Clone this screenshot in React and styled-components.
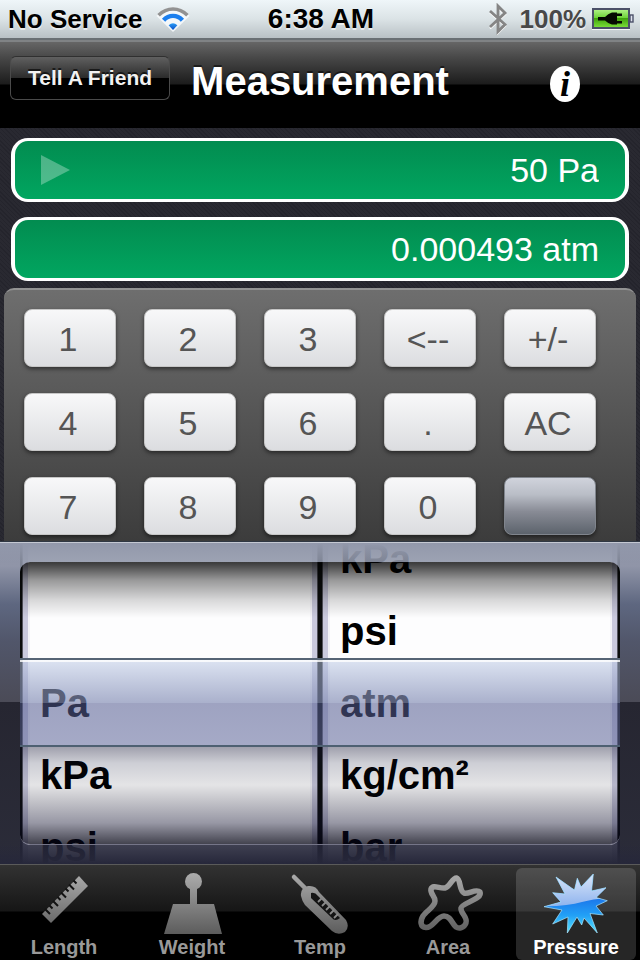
import React, { useState } from 'react';
import styled, { createGlobalStyle } from 'styled-components';

const GlobalStyle = createGlobalStyle`
  * {
    box-sizing: border-box;
  }
  body {
    margin: 0;
    background: #000;
    font-family: 'Liberation Sans', Arial, sans-serif;
  }
  button,
  input {
    font-family: inherit;
    border: none;
    padding: 0;
    margin: 0;
  }
`;

const keys = [
  '1', '2', '3', '<--', '+/-',
  '4', '5', '6', '.', 'AC',
  '7', '8', '9', '0', '',
];

const fromUnits = ['', '', 'Pa', 'kPa', 'psi'];
const toUnits = ['kPa', 'psi', 'atm', 'kg/cm²', 'bar'];

const WifiIcon = () => (
  <svg width='34' height='26' viewBox='0 0 34 26' fill='none'>
    <defs>
      <linearGradient id='wifiBlue' x1='0' y1='0' x2='0' y2='1'>
        <stop offset='0' stopColor='#2a9bf5' />
        <stop offset='1' stopColor='#0a4fc8' />
      </linearGradient>
    </defs>
    <path
      d='M17 26 L0.5 10 Q7 1.5 17 1.5 Q27 1.5 33.5 10 Z'
      fill='#f6fafc'
      opacity='0.9'
    />
    <path d='M2.6 9.2 Q9 3 17 3 Q25 3 31.4 9.2' stroke='#929292' strokeWidth='3.6' />
    <path d='M7.6 14.2 Q11.5 9.9 17 9.9 Q22.5 9.9 26.4 14.2' stroke='#1c7fee' strokeWidth='4.4' />
    <path d='M17 24 L12.6 19.2 Q17 15.2 21.4 19.2 Z' fill='url(#wifiBlue)' />
  </svg>
);

const BluetoothIcon = () => (
  <svg width='20' height='32' viewBox='0 0 20 32' fill='none'>
    <path d='M2 9.5 L17 23 L10 30 V5 L17 11.5 L2 25.5' stroke='#fff' strokeWidth='2' />
    <path d='M2 8 L17 21.5 L10 28.5 V3 L17 10 L2 24' stroke='#858585' strokeWidth='2.8' />
  </svg>
);

const BatteryIcon = () => (
  <svg width='42' height='22' viewBox='0 0 42 22'>
    <defs>
      <linearGradient id='charge' x1='0' y1='0' x2='0' y2='1'>
        <stop offset='0' stopColor='#b4f48a' />
        <stop offset='0.45' stopColor='#6fd43a' />
        <stop offset='0.5' stopColor='#3fa30c' />
        <stop offset='1' stopColor='#7fe33c' />
      </linearGradient>
    </defs>
    <rect x='0' y='2' width='38' height='20' fill='#fff' opacity='0.8' />
    <rect x='1' y='1' width='36' height='19' fill='url(#charge)' stroke='#4b5068' strokeWidth='2' />
    <rect x='38' y='7' width='3' height='7' fill='#dfe3ee' stroke='#4b5068' strokeWidth='1.4' />
    <path
      d='M6 9 H13 Q16 5.5 20 4.5 H25 V5.5 H30 V8 H25 V13 H30 V15.5 H25 V16.5 H20 Q16 15.500 13 12.5 H6 Z'
      fill='#050a02'
    />
  </svg>
);

const Greys = ({ id }) => (
  <defs>
    <linearGradient id={id} gradientUnits='userSpaceOnUse' x1='0' y1='0' x2='0' y2='64'>
      <stop offset='0' stopColor='#b0b0b0' />
      <stop offset='1' stopColor='#5c5c5c' />
    </linearGradient>
  </defs>
);

const LengthIcon = () => (
  <TabIcon viewBox='0 0 80 64'>
    <Greys id='gLength' />
    <path d='M18 44 L55 6 L64 16 L27 53 Z' fill='url(#gLength)' />
    <path
      d='M21 39 l5 5 M25.500 35.500 l3 3 M29 31 l5 5 M33.500 27 l3 3 M37 22.500 l5 5 M41.500 18.500 l3 3 M45 14.500 l5 5 M49.500 10.500 l3 3'
      stroke='#121212'
      strokeWidth='2'
    />
  </TabIcon>
);

const WeightIcon = () => (
  <TabIcon viewBox='0 0 80 64'>
    <Greys id='gWeight' />
    <g fill='url(#gWeight)'>
      <circle cx='41.5' cy='11.5' r='8.5' />
      <rect x='38' y='18' width='7' height='17' />
      <path d='M21 34 H62 L70 64 H12 Z' />
    </g>
  </TabIcon>
);

const TempIcon = () => (
  <TabIcon viewBox='0 0 80 64'>
    <Greys id='gTemp' />
    <path d='M14 7 L25 18' stroke='url(#gTemp)' strokeWidth='4.500' strokeLinecap='round' />
    <path
      d='M21 26 Q20 18 28 16 Q36 15 39 22 L66 50 Q70 57 65 62 Q58 66 52 61 L25 35 Q22 31 21 26 Z'
      fill='url(#gTemp)'
    />
    <path
      d='M31 23 Q35 22 38 26 L60 48 Q55 52 52 48 L31 28 Z'
      fill='#141414'
    />
    <path
      d='M38 32 l4 -4 M42 36 l4 -4 M46 40 l4 -4 M50 44 l4 -4 M54 48 l4 -4'
      stroke='#8a8a8a'
      strokeWidth='1.8'
    />
  </TabIcon>
);

const AreaIcon = () => (
  <TabIcon viewBox='0 0 80 64'>
    <Greys id='gArea' />
    <path
      d='M48.500 8 C53 9 51 21 56 23 C60 25 68 18 72 22 C75 29 54 33 53 38 C52 43 60 47 58 53 C56 58 51 59 48 57 C44 54 43 46 36 46 C29 46 25 58 18 57.500 C12 57 12 51 15 46 C18 41 27 37 27 31 C27 26 22 24 23 19 C25 14 32 19 37 18 C42 17 44 8 48.500 8 Z'
      fill='none'
      stroke='url(#gArea)'
      strokeWidth='5.500'
      strokeLinejoin='round'
    />
  </TabIcon>
);

const burst =
  'M20 7 L35.500 18 L38.500 20 L41.300 8.300 L45 17 L57.300 4 L55.500 21 L70 17.700 L60 27.500 L71.300 30.700 L60 36 L67.300 45 L54 43.500 L61.300 63 L48 48 L45.700 55 L41 47 L31.300 63 L32 47 L16.700 54 L26 40 L8 36.700 L25 32 L16.700 22.700 L29 24 Z';

const PressureIcon = () => (
  <TabIcon viewBox='0 0 80 64'>
    <defs>
      <linearGradient id='burstLow' x1='0' y1='0' x2='0' y2='1'>
        <stop offset='0.4' stopColor='#1b74ea' />
        <stop offset='0.7' stopColor='#22a0f6' />
        <stop offset='1' stopColor='#56e6ff' />
      </linearGradient>
      <linearGradient id='burstTop' x1='0' y1='0' x2='0' y2='1'>
        <stop offset='0' stopColor='#e4ecfa' />
        <stop offset='1' stopColor='#8fb4ee' />
      </linearGradient>
      <clipPath id='burstClip'>
        <path d={burst} />
      </clipPath>
    </defs>
    <path d={burst} fill='url(#burstLow)' />
    <path
      d='M0 0 H80 V28 Q60 28 46 32 Q30 37 0 36 Z'
      fill='url(#burstTop)'
      clipPath='url(#burstClip)'
    />
    <path d={burst} fill='none' stroke='#a8e4ff' strokeWidth='1' opacity='0.7' />
  </TabIcon>
);

const tabs = [
  { name: 'Length', Icon: LengthIcon },
  { name: 'Weight', Icon: WeightIcon },
  { name: 'Temp', Icon: TempIcon },
  { name: 'Area', Icon: AreaIcon },
  { name: 'Pressure', Icon: PressureIcon },
];

const UnitWheel = ({ label, units }) => (
  <Wheel role='listbox' aria-label={label}>
    {units.map((unit, i) => (
      <Unit key={i} role='option' aria-selected={i === 2}>
        {unit}
      </Unit>
    ))}
  </Wheel>
);

const App = () => {
  const [tab, setTab] = useState('Pressure');

  return (
    <Screen>
      <GlobalStyle />
      <StatusBar>
        <StatusGroup>
          <Carrier>No Service</Carrier>
          <WifiIcon />
        </StatusGroup>
        <Clock>6:38 AM</Clock>
        <StatusGroup $end>
          <BluetoothIcon />
          <Charge>100%</Charge>
          <BatteryIcon />
        </StatusGroup>
      </StatusBar>

      <Header>
        <HeaderSide>
          <FriendButton type='button'>Tell A Friend</FriendButton>
        </HeaderSide>
        <Title>Measurement</Title>
        <HeaderSide $end>
          <InfoButton type='button' aria-label='Info'>
            i
          </InfoButton>
        </HeaderSide>
      </Header>

      <Readouts>
        <Readout>
          <Marker viewBox='0 0 30 32'>
            <path d='M1 1 L30 16 L1 31 Z' fill='#fff' opacity='0.3' />
          </Marker>
          <Value aria-label='From' readOnly value='50 Pa' />
        </Readout>
        <Readout>
          <Value aria-label='To' readOnly value='0.000493 atm' />
        </Readout>
      </Readouts>

      <Keypad>
        {keys.map((k, i) => (
          <Key key={i} type='button' $blank={!k} aria-label={k || 'Blank'}>
            {k}
          </Key>
        ))}
      </Keypad>

      <Picker>
        <UnitWheel label='From unit' units={fromUnits} />
        <UnitWheel label='To unit' units={toUnits} />
        <TopShade />
        <BottomShade />
        <Side $left />
        <Side />
        <Selection />
      </Picker>

      <TabBar>
        {tabs.map(({ name, Icon }) => (
          <Tab
            key={name}
            type='button'
            $active={tab === name}
            onClick={() => setTab(name)}
          >
            <Icon />
            {name}
          </Tab>
        ))}
      </TabBar>
    </Screen>
  );
};

const Screen = styled.div`
  min-height: 100vh;
  display: flex;
  flex-direction: column;
  background: repeating-linear-gradient(45deg, #24242c 0 1px, #292931 1px 3px);
`;

const StatusBar = styled.div`
  display: grid;
  grid-template-columns: 1fr auto 1fr;
  align-items: center;
  height: 40px;
  padding: 0 6px 0 8px;
  font-weight: bold;
  color: #000;
  text-shadow: 0 2px 0 rgba(255, 255, 255, 0.6);
  background: linear-gradient(#eff6f9, #dbe3e6 50%, #b9c1c5);
  border-bottom: 2px solid #6a7074;
`;
const StatusGroup = styled.div`
  display: flex;
  align-items: center;
  justify-content: ${(p) => (p.$end ? 'flex-end' : 'flex-start')};
  gap: ${(p) => (p.$end ? '6px' : '14px')};
`;
const Carrier = styled.span`
  font-size: 26px;
`;
const Clock = styled.span`
  font-size: 28px;
`;
const Charge = styled.span`
  margin-left: 6px;
  font-size: 26px;
  color: #484848;
`;

const Header = styled.header`
  display: grid;
  grid-template-columns: 1fr auto 1fr;
  align-items: flex-start;
  height: 88px;
  padding: 14px 10px 0;
  background: linear-gradient(#666 0, #474747 16px, #1c1c1c 42px, #000 43px);
  border-top: 2px solid #808385;
`;
const HeaderSide = styled.div`
  display: flex;
  justify-content: ${(p) => (p.$end ? 'flex-end' : 'flex-start')};
  padding: ${(p) => (p.$end ? '10px 50px 0 0' : '0')};
`;
const FriendButton = styled.button`
  width: 160px;
  height: 44px;
  color: #f2f2f2;
  font-size: 21px;
  font-weight: bold;
  white-space: nowrap;
  text-shadow: 0 -2px 0 rgba(0, 0, 0, 0.6);
  background: linear-gradient(#606060, #2c2c2c 49%, #000 50%);
  border: 1px solid #4a4a4a;
  border-top-color: #303030;
  border-radius: 6px;
`;
const Title = styled.h1`
  margin: 0;
  font-size: 40px;
  line-height: 50px;
  color: #fff;
  text-shadow: 0 -2px 0 rgba(0, 0, 0, 0.5);
`;
const InfoButton = styled.button`
  width: 30px;
  height: 36px;
  font: italic bold 36px/34px 'Liberation Serif', serif;
  color: #000;
  background: #fff;
  border-radius: 50%;
`;

const Readouts = styled.div`
  display: flex;
  flex-direction: column;
  gap: 15px;
  padding: 10px 11px 7px;
`;
const Readout = styled.div`
  display: flex;
  align-items: center;
  height: 64px;
  padding: 0 26px 0 25px;
  background: linear-gradient(#028c50, #01a660);
  border: solid #fff;
  border-width: 3px 4px;
  border-radius: 17px;
`;
const Marker = styled.svg`
  flex: none;
  width: 30px;
  height: 32px;
`;
const Value = styled.input`
  flex: 1;
  min-width: 0;
  font-size: 34px;
  text-align: right;
  color: #fff;
  background: none;
  outline: none;
`;

const Keypad = styled.div`
  display: grid;
  grid-template-columns: repeat(5, 1fr);
  gap: 26px 28px;
  margin: 0 4px;
  padding: 19px 40px 6px 20px;
  background: linear-gradient(#6e6e6e, #3c3c3c);
  border-top: 2px solid #939393;
  border-radius: 10px 10px 0 0;
`;
const Key = styled.button`
  height: 58px;
  padding: 2px 4px 0 0;
  font-size: 34px;
  color: #555;
  background: ${(p) =>
    p.$blank
      ? 'linear-gradient(#d0d3dc, #b9bdc6 30%, #888b95 60%, #5c636c)'
      : 'linear-gradient(#f8f8f9, #dcdde0)'};
  border: 1px solid ${(p) => (p.$blank ? '#80858d' : '#c6c6c6')};
  border-radius: 8px;
  box-shadow: 0 2px 4px rgba(0, 0, 0, 0.5);
`;

const Picker = styled.div`
  position: relative;
  flex: 1;
  min-height: 300px;
  display: flex;
  gap: 4px;
  padding: 0 22px;
  overflow: hidden;
  background: #0b0d0d;
  border-top: 1px solid #303844;

  /* the frame turns solid towards its outer edges */
  &::before {
    content: '';
    position: absolute;
    inset: 0;
    border-top: 1px solid #c4c8d2;
    background: linear-gradient(
      #9298ab,
      rgba(146, 152, 171, 0) 20px,
      rgba(38, 39, 58, 0) calc(100% - 20px),
      #26273a
    );
    z-index: 1;
  }
`;
const Wheel = styled.ul`
  flex: 1;
  display: flex;
  flex-direction: column;
  justify-content: center;
  height: 322px;
  margin: 0;
  padding: 0 0 0 18px;
  list-style: none;
  background: linear-gradient(
    to right,
    #55555f 1px,
    #c9c9dd 1px 6px,
    #f4f4f8 6px 8px,
    #fdfdfe 8px calc(100% - 8px),
    #f4f4f8 calc(100% - 8px) calc(100% - 6px),
    #c9c9dd calc(100% - 6px) calc(100% - 1px),
    #55555f calc(100% - 1px)
  );
`;
const Unit = styled.li`
  flex: none;
  height: 72px;
  font-size: 40px;
  font-weight: bold;
  line-height: 72px;
  color: #000;
  text-shadow: 0 2px 0 #fff;
`;
const TopShade = styled.div`
  position: absolute;
  top: 20px;
  left: 20px;
  right: 20px;
  height: 96px;
  border-radius: 10px 10px 0 0;
  background: linear-gradient(
    rgba(0, 0, 0, 0.78),
    rgba(0, 0, 0, 0.4) 18px,
    rgba(0, 0, 0, 0.15) 38px,
    rgba(0, 0, 0, 0) 56px
  );
  box-shadow: 0 0 0 22px rgba(144, 150, 169, 0.88);
  clip-path: inset(-22px -22px 0 -22px);
`;
const BottomShade = styled.div`
  position: absolute;
  bottom: 19px;
  left: 20px;
  right: 20px;
  height: 98px;
  border-radius: 0 0 10px 10px;
  background: linear-gradient(
    rgba(20, 20, 50, 0.4),
    rgba(15, 20, 50, 0.2) 16px,
    rgba(10, 10, 20, 0.1) 38px,
    rgba(10, 10, 30, 0.22) 52px,
    rgba(10, 10, 40, 0.42) 76px,
    rgba(5, 5, 20, 0.75)
  );
  border-bottom: 1px solid #77778a;
  box-shadow: 0 0 0 22px rgba(38, 39, 58, 0.88);
  clip-path: inset(0 -22px -22px -22px);
`;
const Side = styled.div`
  position: absolute;
  top: 0;
  bottom: 0;
  ${(p) => (p.$left ? 'left: 0;' : 'right: 0;')}
  width: 20px;
  background: linear-gradient(
    #8d93a6,
    #9095a8 24px,
    #5e6780 62px,
    #51566a 100px,
    #4b4b57 160px,
    #262631 160px,
    #2b2c39
  );
`;
const Selection = styled.div`
  position: absolute;
  top: 116px;
  left: 20px;
  right: 20px;
  height: 89px;
  background: linear-gradient(
    rgba(188, 202, 230, 0.5),
    rgba(130, 140, 180, 0.68) 43px,
    rgba(84, 92, 145, 0.56) 43px,
    rgba(96, 104, 155, 0.56)
  );
  border-top: 2px solid #566475;
  border-bottom: 2px solid #4e6072;
  box-shadow: inset 0 2px 0 rgba(255, 255, 255, 0.8);
`;

const TabBar = styled.nav`
  display: grid;
  grid-template-columns: repeat(5, 1fr);
  height: 96px;
  background: linear-gradient(#323232, #161616 46px, #000 47px);
  border-top: 1px solid #5a5a5a;
`;
const Tab = styled.button`
  display: flex;
  flex-direction: column;
  align-items: center;
  margin: 3px 4px 2px;
  padding-top: 2px;
  font-size: 20px;
  font-weight: bold;
  line-height: 26px;
  color: ${(p) => (p.$active ? '#fff' : '#999')};
  background: ${(p) => (p.$active ? 'rgba(255, 255, 255, 0.15)' : 'none')};
  border-radius: 6px;
`;
const TabIcon = styled.svg`
  flex: none;
  width: 80px;
  height: 64px;
`;

export default App;
